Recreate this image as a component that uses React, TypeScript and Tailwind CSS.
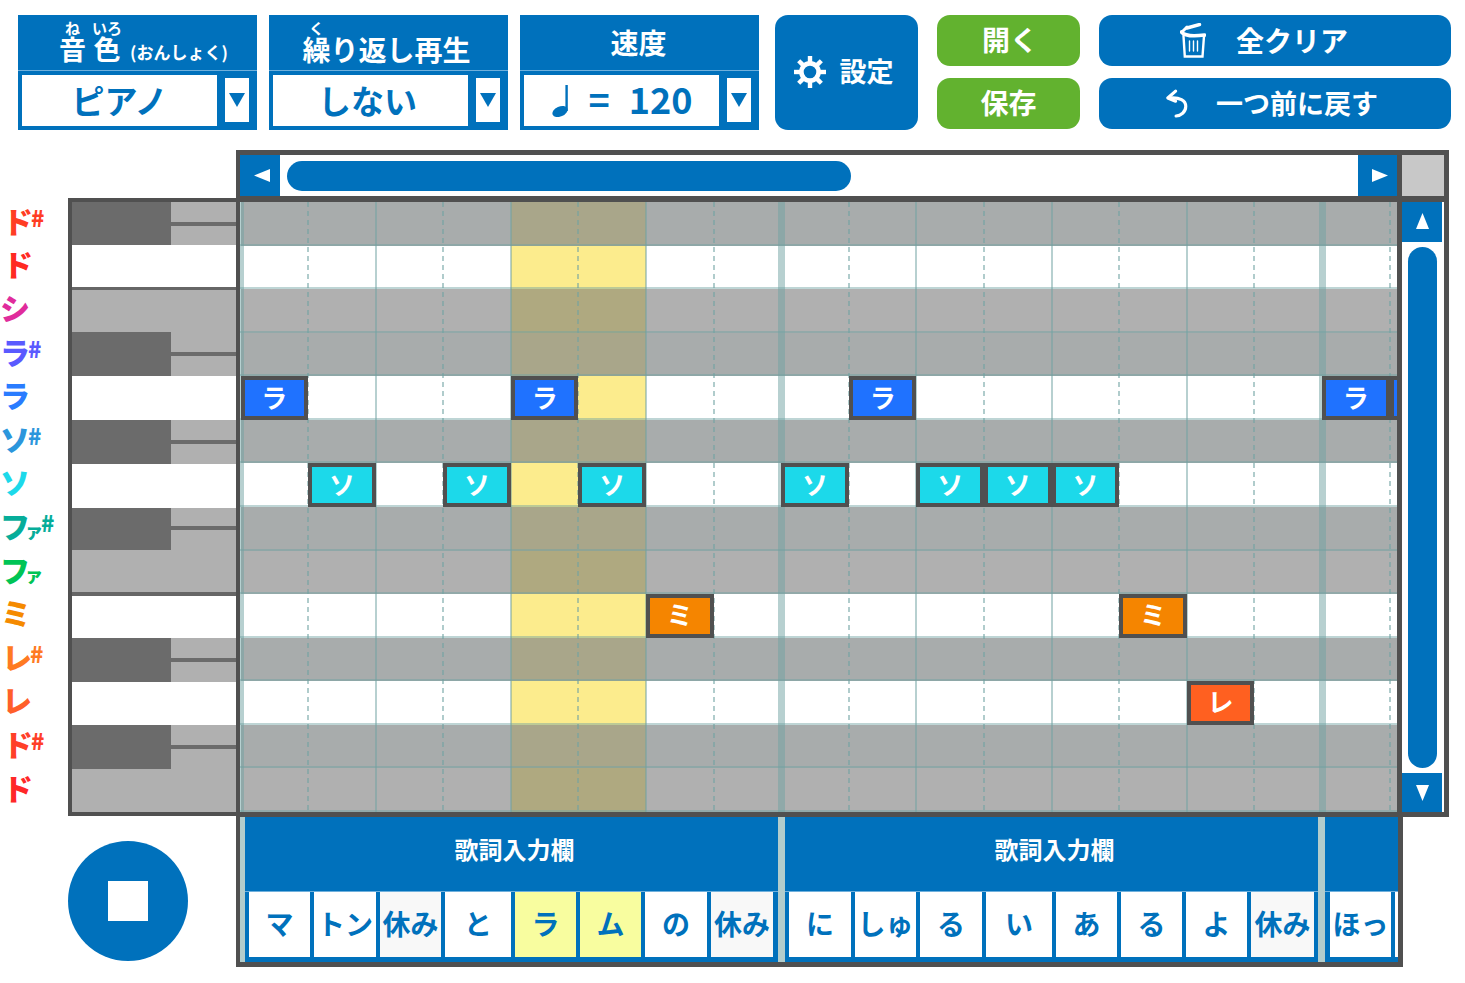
import type { ReactNode } from "react";

/* ─── Data ─── */

type RowKind = "black" | "gray" | "white";

const ROWS: RowKind[] = ["black", "white", "gray", "black", "white", "black", "white", "black", "gray", "white", "black", "white", "black", "gray"];

const CELL_BG: Record<RowKind, string> = { black: "bg-[#a8acac]", gray: "bg-[#b0b0b0]", white: "bg-white" };
const CELL_BG_HL: Record<RowKind, string> = { black: "bg-[#a9a68a]", gray: "bg-[#afa980]", white: "bg-[#fcec8d]" };

const NOTES: Record<string, { text: string; color: string }> = {
  "4-0": { text: "ラ", color: "bg-[#1f72ff]" },
  "4-4": { text: "ラ", color: "bg-[#1f72ff]" },
  "4-9": { text: "ラ", color: "bg-[#1f72ff]" },
  "4-16": { text: "ラ", color: "bg-[#1f72ff]" },
  "4-17": { text: "", color: "bg-[#1f72ff]" },
  "6-1": { text: "ソ", color: "bg-[#1cd9ea]" },
  "6-3": { text: "ソ", color: "bg-[#1cd9ea]" },
  "6-5": { text: "ソ", color: "bg-[#1cd9ea]" },
  "6-8": { text: "ソ", color: "bg-[#1cd9ea]" },
  "6-10": { text: "ソ", color: "bg-[#1cd9ea]" },
  "6-11": { text: "ソ", color: "bg-[#1cd9ea]" },
  "6-12": { text: "ソ", color: "bg-[#1cd9ea]" },
  "9-6": { text: "ミ", color: "bg-[#f58500]" },
  "9-13": { text: "ミ", color: "bg-[#f58500]" },
  "11-14": { text: "レ", color: "bg-[#ff6020]" },
};

const LABELS = [
  { text: "ド", sharp: true, color: "text-[#ff3d24]", pad: "pl-[3px]" },
  { text: "ド", sharp: false, color: "text-[#ff2a22]", pad: "pl-[3px]" },
  { text: "シ", sharp: false, color: "text-[#e02c9c]", pad: "pl-[0px]" },
  { text: "ラ", sharp: true, color: "text-[#5a5aff]", pad: "pl-[0px]" },
  { text: "ラ", sharp: false, color: "text-[#2a7cff]", pad: "pl-[0px]" },
  { text: "ソ", sharp: true, color: "text-[#2c96dc]", pad: "pl-[0px]" },
  { text: "ソ", sharp: false, color: "text-[#1cd9ea]", pad: "pl-[0px]" },
  { text: "ファ", sharp: true, color: "text-[#06ad9a]", pad: "pl-[0px]" },
  { text: "ファ", sharp: false, color: "text-[#00c455]", pad: "pl-[0px]" },
  { text: "ミ", sharp: false, color: "text-[#f58a00]", pad: "pl-[1px]" },
  { text: "レ", sharp: true, color: "text-[#ff7a22]", pad: "pl-[2px]" },
  { text: "レ", sharp: false, color: "text-[#ff5f2a]", pad: "pl-[2px]" },
  { text: "ド", sharp: true, color: "text-[#ff4028]", pad: "pl-[3px]" },
  { text: "ド", sharp: false, color: "text-[#ff2828]", pad: "pl-[3px]" },
];

const KEYS = [
  { kind: "black", h: "h-[43px]", top: "h-[20px]" },
  { kind: "white", h: "h-[42px]" },
  { kind: "sep", h: "h-[3px]" },
  { kind: "gray", h: "h-[42px]" },
  { kind: "black", h: "h-[44px]", top: "h-[20px]" },
  { kind: "white", h: "h-[44px]" },
  { kind: "black", h: "h-[44px]", top: "h-[20px]" },
  { kind: "white", h: "h-[44px]" },
  { kind: "black", h: "h-[42px]", top: "h-[18px]" },
  { kind: "gray", h: "h-[42px]" },
  { kind: "sep", h: "h-[4px]" },
  { kind: "white", h: "h-[42px]" },
  { kind: "black", h: "h-[44px]", top: "h-[20px]" },
  { kind: "white", h: "h-[43px]" },
  { kind: "black", h: "h-[44px]", top: "h-[20px]" },
  { kind: "gray", h: "h-[43px]" },
];

const LYRICS_A = [
  { t: "マ", w: "w-[61px]", bg: "bg-white" },
  { t: "トン", w: "w-[62px]", bg: "bg-white" },
  { t: "休み", w: "w-[61px]", bg: "bg-[#f8f8f8]" },
  { t: "と", w: "w-[66px]", bg: "bg-white" },
  { t: "ラ", w: "w-[61px]", bg: "bg-[#f8fd9f]" },
  { t: "ム", w: "w-[61px]", bg: "bg-[#f8fd9f]" },
  { t: "の", w: "w-[62px]", bg: "bg-white" },
  { t: "休み", w: "w-[62px]", bg: "bg-[#f8f8f8]" },
];

const LYRICS_B = [
  { t: "に", w: "w-[62px]", bg: "bg-white" },
  { t: "しゅ", w: "w-[61px]", bg: "bg-white" },
  { t: "る", w: "w-[62px]", bg: "bg-white" },
  { t: "い", w: "w-[66px]", bg: "bg-white" },
  { t: "あ", w: "w-[61px]", bg: "bg-white" },
  { t: "る", w: "w-[61px]", bg: "bg-white" },
  { t: "よ", w: "w-[61px]", bg: "bg-white" },
  { t: "休み", w: "w-[63px]", bg: "bg-[#f8f8f8]" },
];

/* ─── Icons ─── */

function Tri({ dir, className }: { dir: "up" | "down" | "left" | "right"; className: string }) {
  const points = { up: "8,0 16,16 0,16", down: "0,0 16,0 8,16", left: "16,0 16,16 0,8", right: "0,0 16,8 0,16" }[dir];
  return (
    <svg viewBox="0 0 16 16" preserveAspectRatio="none" className={className}>
      <polygon points={points} fill="currentColor" />
    </svg>
  );
}

function Gear() {
  return (
    <svg width="32" height="32" viewBox="0 0 32 32" className="text-white">
      {[0, 45, 90, 135, 180, 225, 270, 315].map((a) => (
        <rect key={a} x="13.8" y="0" width="4.4" height="8" fill="currentColor" transform={`rotate(${a} 16 16)`} />
      ))}
      <circle cx="16" cy="16" r="8.6" fill="none" stroke="currentColor" strokeWidth="4.6" />
    </svg>
  );
}

function Trash() {
  return (
    <svg width="26" height="36" viewBox="0 0 26 36" fill="none" stroke="white" strokeLinecap="round">
      <path d="M3.5 13 L4.8 33.5 H22.5 L24 13" strokeWidth="2.4" />
      <path d="M1.5 9 Q6 14.5 24.5 12" strokeWidth="3.6" />
      <path d="M7 5 L19.5 1.5" strokeWidth="3.4" />
      <path d="M3 8 L7 4" strokeWidth="3" />
      <path d="M9.5 18 V28 M13.5 18 V28 M17.5 18 V28" strokeWidth="1.4" />
    </svg>
  );
}

function Undo() {
  return (
    <svg width="24" height="34" viewBox="0 0 26 34" fill="none" stroke="white" strokeWidth="3.4" strokeLinecap="round" strokeLinejoin="round">
      <path d="M11.5 3 L3 10.5 L11.5 14" />
      <path d="M5 10.5 C16 9.5 22.5 13 22.5 19.5 C22.5 26 17 29.5 12 30" />
    </svg>
  );
}

function QuarterNote() {
  return (
    <svg width="18" height="32" viewBox="0 0 18 32" className="text-[#0071bc]">
      <ellipse cx="9" cy="26.5" rx="8" ry="5" fill="currentColor" transform="rotate(-24 9 26.5)" />
      <rect x="14.4" y="0" width="2.4" height="26" fill="currentColor" />
    </svg>
  );
}

/* ─── Top Bar ─── */

function SelectBlock({ title, children }: { title: ReactNode; children: ReactNode }) {
  return (
    <div className="flex h-[115px] w-[239px] flex-col bg-[#0071bc]">
      <div className="flex h-[56px] items-end justify-center border-b border-[#6fb0dc] font-bold text-white">{title}</div>
      <div className="flex items-start pt-[4px]">
        <div className="ml-[4px] flex h-[51px] w-[195px] items-center justify-center bg-white font-bold text-[#0071bc]">{children}</div>
        <div className="ml-[8px] mt-[3px] flex h-[44px] w-[24px] items-center justify-center bg-white">
          <Tri dir="down" className="h-[14px] w-[16px] text-[#0071bc]" />
        </div>
      </div>
    </div>
  );
}

function TopBar() {
  return (
    <div className="flex pl-[18px] pt-[15px]">
      <SelectBlock
        title={
          <div className="mb-[4px] flex w-full items-end pl-[41px] leading-none">
            <ruby className="text-[27px] leading-[34px]">
              音<rt className="text-[15px] leading-[14px]">ね</rt>
            </ruby>
            <ruby className="ml-[6px] text-[27px] leading-[34px]">
              色<rt className="text-[15px] leading-[14px]">いろ</rt>
            </ruby>
            <span className="mb-[2px] ml-[8px] text-[17px] leading-[24px]">(おんしょく)</span>
          </div>
        }
      >
        <span className="text-[33px] leading-none">ピアノ</span>
      </SelectBlock>
      <div className="ml-[12px]">
        <SelectBlock
          title={
            <div className="mb-[2px] mr-[4px] flex items-end">
              <ruby className="text-[28px] leading-[38px]">
                繰<rt className="text-[15px] leading-[12px]">く</rt>
              </ruby>
              <span className="text-[28px] leading-[38px]">り返し再生</span>
            </div>
          }
        >
          <span className="mb-[1px] mr-[6px] text-[33px] leading-none">しない</span>
        </SelectBlock>
      </div>
      <div className="ml-[12px]">
        <SelectBlock title={<span className="mb-[9px] mr-[2px] text-[28px] leading-[38px]">速度</span>}>
          <div className="flex items-center text-[36px] leading-none">
            <QuarterNote />
            <span className="mb-[5px] ml-[20px]">=</span>
            <span className="mb-[5px] ml-[19px]">120</span>
          </div>
        </SelectBlock>
      </div>

      <button className="ml-[16px] flex h-[115px] w-[143px] items-center justify-center gap-[14px] rounded-[13px] bg-[#0071bc] pb-[2px] pr-[6px] text-[27px] font-bold text-white">
        <Gear />
        <span>設定</span>
      </button>

      <div className="ml-[19px] flex w-[143px] flex-col gap-[12px]">
        <button className="h-[51px] rounded-[13px] bg-[#62b22f] pb-[4px] pl-[3px] text-[28px] font-bold leading-none text-white">開く</button>
        <button className="h-[51px] rounded-[13px] bg-[#62b22f] pb-[4px] text-[28px] font-bold leading-none text-white">保存</button>
      </div>

      <div className="ml-[19px] flex w-[352px] flex-col gap-[12px]">
        <button className="flex h-[51px] items-center justify-center gap-[30px] rounded-[13px] bg-[#0071bc] pr-[22px] text-[28px] font-bold leading-none text-white">
          <Trash />
          <span className="mb-[2px]">全クリア</span>
        </button>
        <button className="flex h-[51px] items-center justify-center gap-[27px] rounded-[13px] bg-[#0071bc] pr-[7px] text-[27px] font-bold leading-none text-white">
          <Undo />
          <span className="mb-[2px]">一つ前に戻す</span>
        </button>
      </div>
    </div>
  );
}

/* ─── Keyboard ─── */

function NoteLabels() {
  return (
    <div className="flex w-[68px] shrink-0 flex-col">
      {LABELS.map((l, i) => (
        <div key={i} className={`flex h-[43.6px] items-center font-black ${l.color} ${l.pad}`}>
          <span className="text-[30px] leading-none">
            {l.text === "ファ" ? (
              <>
                フ<span className="-ml-[5px] text-[18px]">ァ</span>
              </>
            ) : (
              l.text
            )}
          </span>
          {l.sharp && <span className="-ml-[2px] -mt-[6px] text-[22px] leading-none">#</span>}
        </div>
      ))}
    </div>
  );
}

function Keyboard() {
  return (
    <div className="h-[618px] w-[168px] shrink-0 border-y-4 border-l-4 border-[#505050]">
      {KEYS.map((k, i) => {
        if (k.kind === "sep") return <div key={i} className={`${k.h} bg-[#666666]`} />;
        if (k.kind === "white") return <div key={i} className={`${k.h} bg-white`} />;
        if (k.kind === "gray") return <div key={i} className={`${k.h} bg-[#b0b0b0]`} />;
        return (
          <div key={i} className={`flex ${k.h}`}>
            <div className="w-[99px] bg-[#6b6b6b]" />
            <div className="flex flex-1 flex-col bg-[#b0b0b0]">
              <div className={k.top} />
              <div className="h-[4px] bg-[#6b6b6b]" />
            </div>
          </div>
        );
      })}
    </div>
  );
}

/* ─── Piano roll ─── */

function GridLines() {
  return (
    <div className="pointer-events-none absolute inset-0">
      <div className="flex h-full pl-[0.5px]">
        {Array.from({ length: 18 }, (_, k) => (
          <div key={k} className="relative h-full w-[67.6px] shrink-0">
            {k % 8 === 0 ? (
              <div className="absolute inset-y-0 -left-[3.5px] w-[7px] bg-[#6fa2a2]/50" />
            ) : k % 2 === 0 ? (
              <div className="absolute inset-y-0 -left-[1px] w-[2px] bg-[#6fa2a2]/50" />
            ) : (
              <div className="absolute inset-y-0 -left-[1px] w-[2px] bg-[repeating-linear-gradient(to_bottom,#6fa2a28c_0,#6fa2a28c_5px,transparent_5px,transparent_9px)]" />
            )}
          </div>
        ))}
      </div>
      <div className="absolute inset-0 flex flex-col">
        {ROWS.map((_, i) => (
          <div key={i} className="h-[43.57px] shrink-0 border-b-2 border-[#6fa2a2]/45" />
        ))}
      </div>
    </div>
  );
}

function PianoRoll() {
  return (
    <div className="relative h-[610px] w-[1157px] overflow-hidden">
      {ROWS.map((kind, r) => (
        <div key={r} className="flex h-[43.57px] pl-[0.5px]">
          {Array.from({ length: 18 }, (_, c) => {
            const note = NOTES[`${r}-${c}`];
            return (
              <div key={c} className={`h-full w-[67.6px] shrink-0 ${c === 4 || c === 5 ? CELL_BG_HL[kind] : CELL_BG[kind]}`}>
                {note && (
                  <div className={`relative z-10 flex h-full items-center justify-center border-[4px] border-[#505050] pb-[3px] text-[26px] font-bold leading-none text-white ${note.color}`}>
                    {note.text}
                  </div>
                )}
              </div>
            );
          })}
        </div>
      ))}
      <GridLines />
    </div>
  );
}

function HScroll() {
  return (
    <div className="flex h-[41px] items-center bg-white">
      <div className="flex h-full w-[40px] items-center justify-center bg-[#0071bc] pl-[4px]">
        <Tri dir="left" className="h-[13px] w-[16px] text-white" />
      </div>
      <div className="ml-[7px] h-[30px] w-[564px] rounded-full bg-[#0071bc]" />
      <div className="ml-auto flex h-full w-[39px] items-center justify-center bg-[#0071bc] pl-[4px]">
        <Tri dir="right" className="h-[13px] w-[16px] text-white" />
      </div>
    </div>
  );
}

function VScroll() {
  return (
    <div className="flex h-[610px] w-[42px] flex-col bg-white">
      <div className="flex h-[40px] w-[40px] items-center justify-center bg-[#0071bc] pb-[3px]">
        <Tri dir="up" className="h-[16px] w-[13px] text-white" />
      </div>
      <div className="ml-[6px] mt-[5px] h-[521px] w-[29px] rounded-full bg-[#0071bc]" />
      <div className="mt-[5px] flex h-[39px] w-[40px] items-center justify-center bg-[#0071bc]">
        <Tri dir="down" className="h-[16px] w-[13px] text-white" />
      </div>
    </div>
  );
}

/* ─── Lyrics ─── */

function LyricCell({ t, w, bg }: { t: string; w: string; bg: string }) {
  return <div className={`flex h-full items-center justify-center whitespace-nowrap pb-[4px] text-[28px] font-bold leading-none text-[#0071bc] ${w} ${bg}`}>{t}</div>;
}

function LyricSection({ cells, className }: { cells: { t: string; w: string; bg: string }[]; className: string }) {
  return (
    <div className={`flex h-full flex-col bg-[#0071bc] ${className}`}>
      <div className="flex h-[75px] items-center justify-center border-b border-[#6fb0dc] pb-[10px] pl-[6px] text-[24px] font-bold leading-none text-white">歌詞入力欄</div>
      <div className="flex h-[65px] gap-[4px] pl-[4px]">
        {cells.map((c, i) => (
          <LyricCell key={i} {...c} />
        ))}
      </div>
    </div>
  );
}

function Lyrics() {
  return (
    <div className="flex h-[150px] w-[1167px] border-b-[5px] border-l-4 border-r-[5px] border-[#505050]">
      <div className="h-full w-[5px] bg-[#b2cccc]" />
      <LyricSection cells={LYRICS_A} className="w-[533px]" />
      <div className="h-full w-[7px] bg-[#b2cccc]" />
      <LyricSection cells={LYRICS_B} className="w-[533px]" />
      <div className="h-full w-[7px] bg-[#b2cccc]" />
      <div className="flex h-full w-[73px] flex-col bg-[#0071bc]">
        <div className="h-[75px] border-b border-[#6fb0dc]" />
        <div className="flex h-[65px] gap-[4px] pl-[5px]">
          <LyricCell t="ほっ" w="w-[61px]" bg="bg-white" />
          <div className="h-full w-[3px] bg-white" />
        </div>
      </div>
    </div>
  );
}

/* ─── Page ─── */

export default function App() {
  return (
    <div className="h-[983px] w-[1465px] overflow-hidden bg-white font-['Noto_Sans_CJK_JP','Noto_Sans',sans-serif]">
      <TopBar />
      <div className="mt-[20px] flex">
        {/* Left: note names, keys, stop */}
        <div className="mt-[48px] w-[236px] shrink-0">
          <div className="flex">
            <NoteLabels />
            <Keyboard />
          </div>
          <button className="ml-[68px] mt-[25px] flex h-[120px] w-[120px] items-center justify-center rounded-full bg-[#0071bc]">
            <span className="h-[40px] w-[40px] bg-white" />
          </button>
        </div>

        {/* Right: roll and lyrics */}
        <div className="w-[1213px] shrink-0">
          <div className="flex border-y-[5px] border-l-4 border-r-[5px] border-[#505050]">
            <div className="w-[1157px]">
              <HScroll />
              <div className="h-[6px] bg-[#505050]" />
              <PianoRoll />
            </div>
            <div className="w-[5px] bg-[#505050]" />
            <div className="w-[42px]">
              <div className="h-[41px] bg-[#c8c8c8]" />
              <div className="h-[6px] bg-[#505050]" />
              <VScroll />
            </div>
          </div>
          <Lyrics />
        </div>
      </div>
    </div>
  );
}
